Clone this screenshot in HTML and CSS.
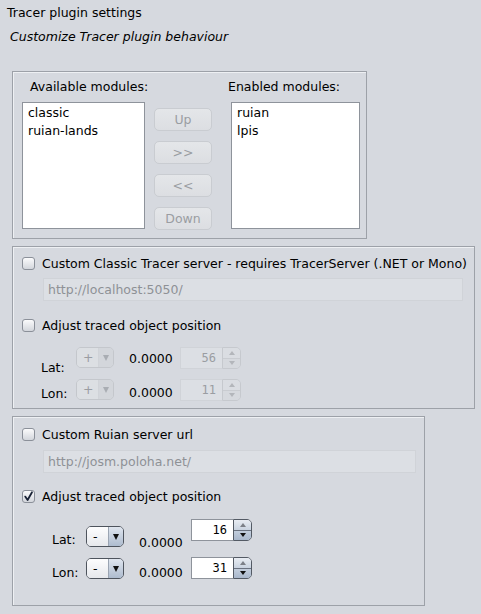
FILE: index.html
```html
<!DOCTYPE html>
<html>
<head>
<meta charset="utf-8">
<link rel="stylesheet" href="styles.css">
</head>
<body>
<div class="page">
  <div class="title">Tracer plugin settings</div>
  <div class="subtitle">Customize Tracer plugin behaviour</div>

  <div class="panel modules">
    <div class="mod-head">
      <span class="mod-label first">Available modules:</span>
      <span class="mod-label">Enabled modules:</span>
    </div>
    <div class="mod-body">
      <div class="list list-avail">
        <div class="item">classic</div>
        <div class="item">ruian-lands</div>
      </div>
      <div class="btn-col">
        <div class="btn">Up</div>
        <div class="btn">&gt;&gt;</div>
        <div class="btn">&lt;&lt;</div>
        <div class="btn">Down</div>
      </div>
      <div class="list list-enabled">
        <div class="item">ruian</div>
        <div class="item">lpis</div>
      </div>
    </div>
  </div>

  <div class="panel classic">
    <div class="check-row">
      <span class="cb"></span>
      <span class="cb-text">Custom Classic Tracer server - requires TracerServer (.NET or Mono)</span>
    </div>
    <div class="field field-classic">http://localhost:5050/</div>
    <div class="check-row check2">
      <span class="cb"></span>
      <span class="cb-text">Adjust traced object position</span>
    </div>
    <div class="coord-row c-lat">
      <span class="coord-label">Lat:</span>
      <span class="combo disabled"><span class="combo-val">+</span><span class="combo-btn"><span class="tri-down"></span></span></span>
      <span class="coord-val">0.0000</span>
      <span class="spinner disabled"><span class="spin-field">56</span><span class="spin-btns"><span class="spin-up"><span class="tri-up-s"></span></span><span class="spin-down"><span class="tri-down-s"></span></span></span></span>
    </div>
    <div class="coord-row c-lon">
      <span class="coord-label">Lon:</span>
      <span class="combo disabled"><span class="combo-val">+</span><span class="combo-btn"><span class="tri-down"></span></span></span>
      <span class="coord-val">0.0000</span>
      <span class="spinner disabled"><span class="spin-field">11</span><span class="spin-btns"><span class="spin-up"><span class="tri-up-s"></span></span><span class="spin-down"><span class="tri-down-s"></span></span></span></span>
    </div>
  </div>

  <div class="panel ruian">
    <div class="check-row">
      <span class="cb"></span>
      <span class="cb-text">Custom Ruian server url</span>
    </div>
    <div class="field field-ruian">http://josm.poloha.net/</div>
    <div class="check-row check2">
      <span class="cb checked"><svg width="13" height="13" viewBox="0 0 13 13"><path d="M3.2 6.6 L5.6 10 L10 2.2" fill="none" stroke="#1a2336" stroke-width="1.8" stroke-linecap="round" stroke-linejoin="round"/></svg></span>
      <span class="cb-text">Adjust traced object position</span>
    </div>
    <div class="coord-row r-lat">
      <span class="coord-label">Lat:</span>
      <span class="combo"><span class="combo-val">-</span><span class="combo-btn"><span class="tri-down"></span></span></span>
      <span class="coord-val">0.0000</span>
      <span class="spinner"><span class="spin-field">16</span><span class="spin-btns"><span class="spin-up"><span class="tri-up-s"></span></span><span class="spin-down"><span class="tri-down-s"></span></span></span></span>
    </div>
    <div class="coord-row r-lon">
      <span class="coord-label">Lon:</span>
      <span class="combo"><span class="combo-val">-</span><span class="combo-btn"><span class="tri-down"></span></span></span>
      <span class="coord-val">0.0000</span>
      <span class="spinner"><span class="spin-field">31</span><span class="spin-btns"><span class="spin-up"><span class="tri-up-s"></span></span><span class="spin-down"><span class="tri-down-s"></span></span></span></span>
    </div>
  </div>
</div>
</body>
</html>
```
FILE: styles.css
```css
html, body {
  margin: 0;
  padding: 0;
  background: #d6d9df;
}
body {
  font-family: "DejaVu Sans", sans-serif;
  font-size: 12.5px;
  color: #000;
  width: 481px;
  height: 614px;
  overflow: hidden;
}
.page {
  padding-top: 6px;
}
.title {
  margin-left: 7px;
  line-height: 14px;
}
.subtitle {
  margin-left: 10px;
  margin-top: 10px;
  line-height: 14px;
  font-style: italic;
}
.panel {
  box-sizing: border-box;
  margin-left: 12px;
  border: 1px solid #9da1a8;
  box-shadow: inset 1px 1px 0 #eef0f3;
}
.modules {
  margin-top: 27px;
  width: 355px;
  height: 168px;
  padding: 8px 0 0 9px;
}
.mod-head {
  display: flex;
  line-height: 14px;
}
.mod-label.first {
  width: 198px;
  padding-left: 8px;
}
.mod-body {
  display: flex;
  margin-top: 8px;
  align-items: flex-start;
}
.list {
  box-sizing: border-box;
  height: 127px;
  background: #fff;
  border: 1px solid #8e939b;
  padding-top: 1px;
}
.list-avail { width: 123px; }
.list-enabled { width: 129px; margin-left: 19px; }
.item {
  line-height: 18px;
  padding-left: 5px;
}
.btn-col {
  display: flex;
  flex-direction: column;
  gap: 10px;
  margin-top: 6px;
  margin-left: 9px;
}
.btn {
  box-sizing: border-box;
  width: 58px;
  height: 23px;
  border: 1px solid #c9ccd1;
  border-radius: 5px;
  background: linear-gradient(#e4e6e9, #dcdee2);
  color: #9a9da2;
  text-align: center;
  line-height: 21px;
}
.classic {
  margin-top: 7px;
  width: 463px;
  height: 163px;
  padding: 10px 0 0 9px;
}
.ruian {
  margin-top: 7px;
  width: 413px;
  height: 190px;
  padding: 11px 0 0 9px;
}
.check-row {
  display: flex;
  align-items: center;
  height: 13px;
  gap: 7px;
}
.cb {
  box-sizing: border-box;
  width: 13px;
  height: 13px;
  border: 1px solid #8b9099;
  border-radius: 3px;
  background: linear-gradient(#fbfbfc, #d3d6dc);
  position: relative;
}
.cb svg {
  position: absolute;
  left: -1px;
  top: -1px;
}
.cb-text {
  line-height: 14px;
}
.field {
  box-sizing: border-box;
  height: 23px;
  margin-left: 21px;
  background: #dcdfe4;
  border: 1px solid #d0d3d8;
  color: #8e9196;
  line-height: 21px;
  padding-left: 4px;
}
.field-classic { width: 420px; margin-top: 8px; }
.field-ruian { width: 373px; margin-top: 9px; }
.classic .check2 { margin-top: 18px; }
.ruian .check2 { margin-top: 17px; }

.coord-row {
  display: flex;
  align-items: flex-start;
}
.coord-label {
  line-height: 14px;
}
.coord-val {
  line-height: 14px;
  margin-left: 15px;
}
.classic .coord-row { padding-left: 19px; }
.classic .coord-label { width: 35px; }
.classic .coord-val { width: 51px; }
.ruian .coord-row { padding-left: 30px; }
.ruian .coord-label { width: 34px; }
.ruian .coord-val { width: 52px; }

.c-lat { margin-top: 15px; }
.c-lat .coord-label { margin-top: 14px; }
.c-lat .coord-val { margin-top: 5px; }
.c-lon { margin-top: 4px; }
.c-lon .coord-label { margin-top: 8px; }
.c-lon .coord-val { margin-top: 7px; }

.r-lat { margin-top: 16px; }
.r-lat .coord-label { margin-top: 14px; }
.r-lat .combo { margin-top: 7px; }
.r-lat .coord-val { margin-top: 17px; }
.r-lon { margin-top: 7px; }
.r-lon .coord-label { margin-top: 9px; }
.r-lon .combo { margin-top: 1px; }
.r-lon .coord-val { margin-top: 9px; }

.combo {
  box-sizing: border-box;
  display: flex;
  width: 38px;
  height: 21px;
  border: 1px solid #4e545d;
  border-radius: 5px;
  overflow: hidden;
}
.combo-val {
  flex: 1;
  background: linear-gradient(#fdfdfe, #e6e8ec);
  line-height: 19px;
  padding-left: 6px;
}
.combo-btn {
  width: 14px;
  border-left: 1px solid #9aa4b2;
  background: linear-gradient(#dfe5ee, #aebccf);
  display: flex;
  align-items: center;
  justify-content: center;
}
.tri-down {
  width: 0;
  height: 0;
  border-left: 3.5px solid transparent;
  border-right: 3.5px solid transparent;
  border-top: 6px solid #111;
}
.combo.disabled {
  border-color: #c4c7cc;
}
.combo.disabled .combo-val {
  background: #dcdfe3;
  color: #9a9da2;
}
.combo.disabled .combo-btn {
  background: #d3d6db;
  border-left-color: #d0d3d8;
}
.combo.disabled .tri-down {
  border-top-color: #a9adb3;
}

.spinner {
  display: flex;
  width: 61px;
  height: 22px;
}
.spin-field {
  box-sizing: border-box;
  width: 42px;
  height: 22px;
  background: #fff;
  border: 1px solid #8e939b;
  border-right: none;
  font-family: "DejaVu Sans Mono", monospace;
  font-size: 12px;
  text-align: right;
  padding-right: 6px;
  line-height: 20px;
}
.spin-btns {
  box-sizing: border-box;
  width: 19px;
  height: 22px;
  display: flex;
  flex-direction: column;
  border: 1px solid #535a64;
  border-radius: 0 5px 5px 0;
  overflow: hidden;
}
.spin-up, .spin-down {
  flex: 1;
  display: flex;
  align-items: center;
  justify-content: center;
}
.spin-up {
  background: linear-gradient(#e9edf3, #c9d3e0);
  border-bottom: 1px solid #6a7280;
}
.spin-down {
  background: linear-gradient(#c3cedd, #a9b8cc);
}
.tri-up-s {
  width: 0;
  height: 0;
  border-left: 3px solid transparent;
  border-right: 3px solid transparent;
  border-bottom: 4px solid #7c8088;
}
.tri-down-s {
  width: 0;
  height: 0;
  border-left: 3px solid transparent;
  border-right: 3px solid transparent;
  border-top: 4px solid #111;
}
.spinner.disabled .spin-field {
  background: #dcdfe4;
  border-color: #d0d3d8;
  color: #9a9da2;
}
.spinner.disabled .spin-btns {
  border-color: #c6c9ce;
}
.spinner.disabled .spin-up {
  background: #dadde2;
  border-bottom-color: #c9ccd1;
}
.spinner.disabled .spin-down {
  background: #d6d9de;
}
.spinner.disabled .tri-up-s { border-bottom-color: #b3b6bb; }
.spinner.disabled .tri-down-s { border-top-color: #b3b6bb; }
```
